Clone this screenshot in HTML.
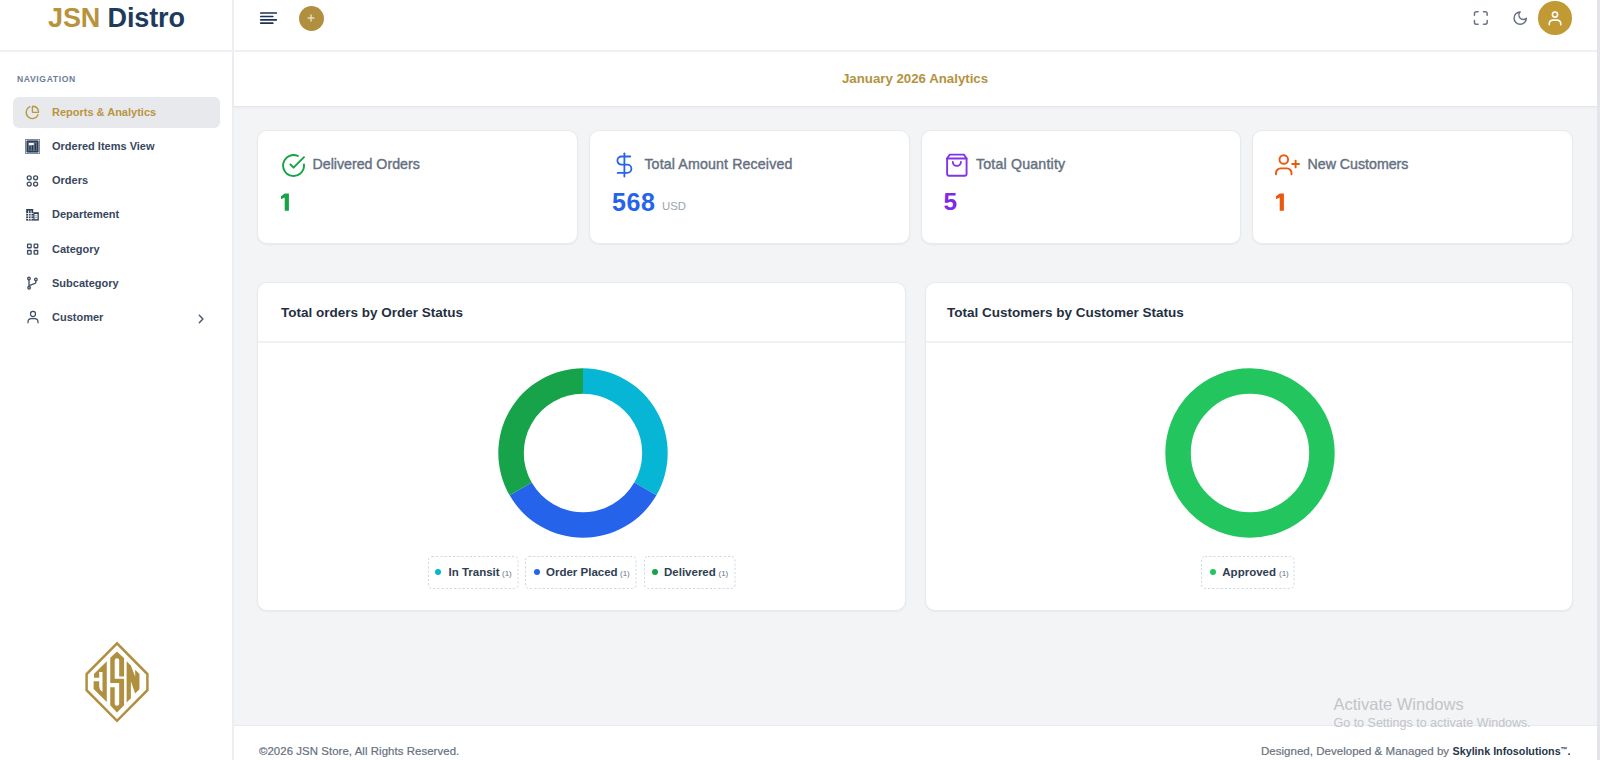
<!DOCTYPE html>
<html>
<head>
<meta charset="utf-8">
<style>
*{margin:0;padding:0;box-sizing:border-box;}
html,body{width:1600px;height:760px;overflow:hidden;background:#f3f4f6;font-family:"Liberation Sans",sans-serif;}
.a{position:absolute;}
.t{position:absolute;line-height:1;white-space:nowrap;}
#sidebar{left:0;top:0;width:232px;height:760px;background:#fff;}
#sbborder{left:232px;top:0;width:2px;height:760px;background:#eceef1;}
#header{left:234px;top:0;width:1363px;height:50px;background:#fff;}
#hdrline{left:0;top:50px;width:1597px;height:2px;background:#eef0f3;}
#scroll{left:1597px;top:0;width:3px;height:760px;background:#e4e5ea;}
#sub{left:234px;top:52px;width:1363px;height:54px;background:#fff;box-shadow:0 1px 0 #e6e7eb,0 2px 3px rgba(0,0,0,0.04);}
.card{position:absolute;background:#fff;border-radius:10px;border:1px solid #e9eaee;box-shadow:0 1px 2px rgba(0,0,0,0.05);}
.nav{color:#37475d;font-size:11px;font-weight:700;}
.lbl{color:#65707f;font-size:14.2px;-webkit-text-stroke:0.4px #65707f;}
.num{font-size:24.5px;font-weight:700;}
.ctitle{color:#1f2f42;font-size:13.5px;font-weight:700;}
.leg{position:absolute;top:556px;height:33px;}
.leg svg{position:absolute;left:0;top:0;}
.leg .d{position:absolute;top:13px;width:6px;height:6px;border-radius:50%;}
.legt{color:#2f3e52;font-size:11.5px;font-weight:700;}
.legc{color:#6b7280;font-size:8px;}
</style>
</head>
<body>
<div id="sidebar" class="a"></div>
<div id="sbborder" class="a"></div>
<div id="header" class="a"></div>
<div id="hdrline" class="a"></div>
<div id="sub" class="a"></div>
<div id="scroll" class="a"></div>

<!-- logo -->
<div class="t" style="left:48px;top:4.5px;font-size:27px;font-weight:700;letter-spacing:-0.12px;"><span style="color:#b8933b">JSN</span> <span style="color:#1e3a5c">Distro</span></div>

<!-- nav -->
<div class="t" style="left:17px;top:75.4px;font-size:8.6px;font-weight:700;color:#6e7c9a;letter-spacing:0.62px;">NAVIGATION</div>
<div class="a" style="left:13px;top:97px;width:207px;height:31px;background:#e8e9ed;border-radius:6px;"></div>
<div class="t nav" style="left:52px;top:106.7px;color:#b8953f;">Reports &amp; Analytics</div>
<div class="t nav" style="left:52px;top:140.9px;">Ordered Items View</div>
<div class="t nav" style="left:52px;top:175.1px;">Orders</div>
<div class="t nav" style="left:52px;top:209.3px;">Departement</div>
<div class="t nav" style="left:52px;top:243.5px;">Category</div>
<div class="t nav" style="left:52px;top:277.7px;">Subcategory</div>
<div class="t nav" style="left:52px;top:311.9px;">Customer</div>

<!-- subheader -->
<div class="t" style="left:842px;top:71.6px;font-size:13.25px;font-weight:700;color:#b39340;">January 2026 Analytics</div>

<!-- stat cards -->
<div class="card" style="left:257px;top:130px;width:320.75px;height:114px;"></div>
<div class="card" style="left:588.75px;top:130px;width:320.75px;height:114px;"></div>
<div class="card" style="left:920.5px;top:130px;width:320.75px;height:114px;"></div>
<div class="card" style="left:1252.25px;top:130px;width:320.75px;height:114px;"></div>

<div class="t lbl" style="left:312.5px;top:157px;">Delivered Orders</div>
<svg class="a" style="left:276px;top:188px;" width="20" height="28" viewBox="0 0 20 28"><path fill="#16a34a" d="M8.7 5.5H12.9V22.66H8.7V9.6L5 11.3V8.2Z"/></svg>
<div class="t lbl" style="left:644.4px;top:157px;letter-spacing:0.14px;">Total Amount Received</div>
<div class="t num" style="left:612px;top:190.2px;color:#2563eb;font-size:25px;letter-spacing:0.6px;">568</div>
<div class="t" style="left:662px;top:201.1px;font-size:11.4px;color:#9ca3af;">USD</div>
<div class="t lbl" style="left:975.9px;top:157px;letter-spacing:0.19px;">Total Quantity</div>
<div class="t num" style="left:943.5px;top:190.1px;color:#7c2ae8;">5</div>
<div class="t lbl" style="left:1307.5px;top:157px;">New Customers</div>
<svg class="a" style="left:1270.5px;top:188px;" width="20" height="28" viewBox="0 0 20 28"><path fill="#ea580c" d="M8.7 5.5H12.9V22.66H8.7V9.6L5 11.3V8.2Z"/></svg>

<!-- chart cards -->
<div class="card" style="left:257px;top:282px;width:648.5px;height:329px;">
  <div class="a" style="left:0;top:58px;width:100%;height:2px;background:#f0f1f4;"></div>
</div>
<div class="card" style="left:924.5px;top:282px;width:648.5px;height:329px;">
  <div class="a" style="left:0;top:58px;width:100%;height:2px;background:#f0f1f4;"></div>
</div>
<div class="t ctitle" style="left:281px;top:305.9px;">Total orders by Order Status</div>
<div class="t ctitle" style="left:947px;top:305.9px;">Total Customers by Customer Status</div>

<!-- footer -->
<div class="a" style="left:234px;top:725px;width:1363px;height:35px;background:#fff;border-top:1px solid #e8eaed;"></div>
<div class="t" style="left:259px;top:745.8px;font-size:11.4px;color:#66707f;-webkit-text-stroke:0.2px #66707f;letter-spacing:0.07px;">©2026 JSN Store, All Rights Reserved.</div>
<div class="t" style="left:1261px;top:745.8px;font-size:11.55px;color:#6b7280;-webkit-text-stroke:0.2px #6b7280;">Designed, Developed &amp; Managed by </div>
<div class="t" style="left:1452.5px;top:746.4px;font-size:10.75px;color:#26364b;font-weight:700;">Skylink Infosolutions<span style="font-size:7px;vertical-align:3px;">™</span>.</div>



<!-- header icons -->
<svg class="a" style="left:258px;top:10px;" width="22" height="16" viewBox="0 0 22 16">
<g stroke="#1e3350" stroke-width="1.7" stroke-linecap="round">
<line x1="2.8" y1="3" x2="18.3" y2="3"/><line x1="2.8" y1="6.5" x2="14.8" y2="6.5"/>
<line x1="2.8" y1="9.8" x2="18.3" y2="9.8"/><line x1="2.8" y1="13.2" x2="14.8" y2="13.2"/>
</g></svg>
<div class="a" style="left:298.6px;top:5.6px;width:25px;height:25px;border-radius:50%;background:#b0903f;"></div>
<svg class="a" style="left:305px;top:12px;" width="12" height="12" viewBox="0 0 12 12">
<g stroke="#eadfc4" stroke-width="1.4"><line x1="6" y1="2.6" x2="6" y2="9.4"/><line x1="2.6" y1="6" x2="9.4" y2="6"/></g></svg>

<svg class="a" style="left:1471px;top:9px;" width="20" height="20" viewBox="0 0 20 20">
<g fill="none" stroke="#6b7280" stroke-width="1.5" stroke-linecap="round" stroke-linejoin="round">
<path d="M3.45 6.3V4.4A1.75 1.75 0 0 1 5.2 2.65H7.1"/><path d="M12.5 2.65h1.9A1.75 1.75 0 0 1 16.15 4.4V6.3"/>
<path d="M16.15 11.6v1.8a1.75 1.75 0 0 1 -1.75 1.75H12.5"/><path d="M7.1 15.15H5.2A1.75 1.75 0 0 1 3.45 13.4V11.6"/>
</g></svg>
<svg class="a" style="left:1511.6px;top:9.8px;" width="16.4" height="16.4" viewBox="0 0 24 24">
<path fill="none" stroke="#646e7e" stroke-width="2.1" stroke-linecap="round" stroke-linejoin="round" d="M12 3a6 6 0 0 0 9 9 9 9 0 1 1-9-9Z"/>
</svg>
<div class="a" style="left:1538.2px;top:1.3px;width:33.5px;height:33.5px;border-radius:50%;background:#c19a34;"></div>
<svg class="a" style="left:1545px;top:8px;" width="20" height="20" viewBox="0 0 20 20">
<g fill="none" stroke="#fff" stroke-width="1.6" stroke-linecap="round">
<circle cx="10" cy="6.6" r="2.6"/><path d="M4.3 16.8v-1.3a3.4 3.4 0 0 1 3.4 -3.4h4.6a3.4 3.4 0 0 1 3.4 3.4v1.3"/>
</g></svg>

<!-- nav icons -->
<svg class="a" style="left:25px;top:104.8px;" width="14.8" height="14.8" viewBox="0 0 24 24">
<g fill="none" stroke="#b8953f" stroke-width="2.2" stroke-linecap="round" stroke-linejoin="round">
<path d="M21 12c.552 0 1.005-.449.95-.998a10 10 0 0 0-8.953-8.951c-.55-.055-.998.398-.998.95v8a1 1 0 0 0 1 1z"/>
<path d="M21.21 15.89A10 10 0 1 1 8 2.83"/>
</g></svg>
<svg class="a" style="left:25px;top:139px;" width="15" height="15" viewBox="0 0 15 15">
<rect x="0" y="0" width="15" height="15" fill="#7d8898"/>
<circle cx="1.4" cy="1.4" r="0.6" fill="#e8ebef"/><circle cx="13.6" cy="1.4" r="0.6" fill="#e8ebef"/><circle cx="1.4" cy="13.6" r="0.6" fill="#e8ebef"/><circle cx="13.6" cy="13.6" r="0.6" fill="#e8ebef"/>
<rect x="2.1" y="2.1" width="10.8" height="10.8" fill="#22344a"/>
<rect x="3.1" y="3.1" width="8.8" height="8.8" fill="#66768a"/>
<rect x="4.4" y="7" width="1.2" height="4.3" fill="#22344a"/><rect x="7" y="6.2" width="1" height="5.1" fill="#22344a"/><rect x="9.7" y="4.2" width="1.2" height="7.1" fill="#22344a"/>
<rect x="3.8" y="4" width="5" height="2.1" fill="#f4f6f8"/>
</svg>
<svg class="a" style="left:25px;top:173px;" width="15" height="15" viewBox="0 0 15 15">
<g fill="none" stroke="#3b4b60" stroke-width="1.3">
<circle cx="4.2" cy="4.8" r="2"/><circle cx="10.6" cy="4.8" r="2"/><circle cx="4.2" cy="11.1" r="2"/><circle cx="10.6" cy="11.1" r="2"/>
</g></svg>
<svg class="a" style="left:25px;top:207px;" width="15" height="15" viewBox="0 0 15 15">
<g fill="#2e3e54">
<rect x="1.2" y="2" width="7" height="11.6"/>
<rect x="8.2" y="5.2" width="5.6" height="8.4"/>
</g>
<g fill="#fff">
<rect x="3.2" y="3.5" width="0.9" height="10"/><rect x="5.6" y="3.5" width="0.9" height="10"/>
<rect x="1.2" y="6" width="7" height="0.8"/><rect x="1.2" y="8.6" width="7" height="0.8"/><rect x="1.2" y="11.2" width="7" height="0.8"/>
<rect x="9.5" y="7" width="3" height="5.2"/>
</g>
<g fill="#2e3e54"><rect x="10.5" y="8.3" width="1" height="1"/><rect x="10.5" y="10.2" width="1" height="1"/></g>
</svg>
<svg class="a" style="left:25px;top:241px;" width="15" height="15" viewBox="0 0 15 15">
<g fill="none" stroke="#3b4b60" stroke-width="1.3">
<rect x="2.55" y="3.15" width="3.6" height="3.6" rx="0.6"/><rect x="9.15" y="3.15" width="3.6" height="3.6" rx="0.6"/>
<rect x="2.55" y="9.5" width="3.6" height="3.6" rx="0.6"/><rect x="9.15" y="9.5" width="3.6" height="3.6" rx="0.6"/>
</g></svg>
<svg class="a" style="left:25px;top:275px;" width="15" height="15" viewBox="0 0 15 15">
<g fill="none" stroke="#435266" stroke-width="1.4" stroke-linecap="round">
<circle cx="3.95" cy="3.5" r="1.25"/><circle cx="10.9" cy="4.4" r="1.25"/><circle cx="4.1" cy="12.8" r="1.25"/>
<line x1="4" y1="4.8" x2="4" y2="11.5"/><path d="M10.9 5.7v1.2q0 1.3 -1.6 1.8l-4.4 1.6"/>
</g></svg>
<svg class="a" style="left:24.5px;top:309.2px;" width="16" height="16" viewBox="0 0 24 24">
<g fill="none" stroke="#3b4b60" stroke-width="1.8" stroke-linecap="round" stroke-linejoin="round">
<circle cx="12" cy="7.5" r="3.8"/><path d="M4.5 20.8v-1.3a5 5 0 0 1 5 -5h5a5 5 0 0 1 5 5v1.3"/>
</g></svg>
<svg class="a" style="left:195px;top:312px;" width="12" height="13" viewBox="0 0 12 13">
<path fill="none" stroke="#4a5a6e" stroke-width="1.45" stroke-linecap="round" stroke-linejoin="round" d="M4.3 3.2l3.6 3.8l-3.6 3.8"/>
</svg>

<!-- card icons -->
<svg class="a" style="left:280.5px;top:152.8px;" width="25.1" height="25.1" viewBox="0 0 24 24">
<g fill="none" stroke="#16a34a" stroke-width="1.85" stroke-linecap="round" stroke-linejoin="round">
<path d="M22 11.08V12a10 10 0 1 1-5.93-9.14"/><path d="M22 4 12 14.01l-3-3"/>
</g></svg>
<svg class="a" style="left:609px;top:151px;" width="30" height="27" viewBox="0 0 30 27">
<g fill="none" stroke="#2563eb" stroke-width="1.8" stroke-linecap="round" stroke-linejoin="round">
<line x1="15.4" y1="2.3" x2="15.4" y2="25.5"/><path d="M21.2 5.5H12.5a4.1 4.1 0 0 0 0 8.2h5.8a4.1 4.1 0 0 1 0 8.2H8.7"/>
</g></svg>
<svg class="a" style="left:943.8px;top:151.6px;" width="25.5" height="26.5" viewBox="0 0 27 28">
<g fill="none" stroke="#8033ea" stroke-width="2" stroke-linecap="round" stroke-linejoin="round">
<path d="M6 2.8h15.2l2.7 4v16.5a1.8 1.8 0 0 1 -1.8 1.8H5.1a1.8 1.8 0 0 1 -1.8 -1.8V6.8z"/><line x1="3.3" y1="6.8" x2="23.9" y2="6.8"/>
<path d="M17.9 10.6a4.3 4.1 0 0 1 -8.6 0"/>
</g></svg>
<svg class="a" style="left:1273px;top:152px;" width="30" height="26" viewBox="0 0 30 26">
<g fill="none" stroke="#ea580c" stroke-width="1.9" stroke-linecap="round" stroke-linejoin="round">
<circle cx="10.8" cy="7.5" r="4.3"/><path d="M3 22.2v-1.2a4.6 4.6 0 0 1 4.6 -4.6h6.3a4.6 4.6 0 0 1 4.6 4.6v1.2"/>
<line x1="22.6" y1="8.6" x2="22.6" y2="15.4"/><line x1="19.2" y1="12" x2="26" y2="12"/>
</g></svg>

<!-- sidebar logo -->
<svg class="a" style="left:84px;top:641px;" width="66" height="82" viewBox="0 0 66 82">
<path fill="none" stroke="#b08f3f" stroke-width="2.5" stroke-linejoin="miter" d="M33 2.3L2.6 33v16.2L33 79.8L63.4 49.2V33z"/>
<g fill="#b08f3f">
<path d="M22.78 20.25V61.04L9.62 47.88V40.32H15.21V45.58Q15.6 49.6 18.5 50.84V31.1H15.21V36.7H9.95V33.08Z"/>
<path d="M32.94 10.58L40.1 17.29V35.62H35.18V19.5A2.23 2.23 0 0 0 30.71 19.5V37.86H40.1V64.24L32.94 71.4L26.24 64.24V46.36H30.71V62.5A2.23 2.23 0 0 0 35.18 62.5V41.88H26.24V16.84Z"/>
<path d="M42.61 20.26L46.89 24.54L51.18 35.74V28.82L55.46 33.1V48.26L51.18 52.54L46.89 40.35V57.15L42.61 61.43Z"/>
</g>
</svg>

<!-- donuts -->
<svg class="a" style="left:497.75px;top:368.3px;" width="170" height="170" viewBox="0 0 170 170">
<path fill="#06b6d4" d="M85.00 0.30A84.7 84.7 0 0 1 158.35 127.35L136.27 114.60A59.2 59.2 0 0 0 85.00 25.80Z"/>
<path fill="#2563eb" d="M158.35 127.35A84.7 84.7 0 0 1 11.65 127.35L33.73 114.60A59.2 59.2 0 0 0 136.27 114.60Z"/>
<path fill="#16a34a" d="M11.65 127.35A84.7 84.7 0 0 1 85.00 0.30L85.00 25.80A59.2 59.2 0 0 0 33.73 114.60Z"/>
</svg>
<svg class="a" style="left:1164.5px;top:368.3px;" width="170" height="170" viewBox="0 0 170 170">
<circle cx="85" cy="85" r="71.95" fill="none" stroke="#22c55e" stroke-width="25.5"/>
</svg>

<!-- legends -->
<div class="leg" style="left:428px;width:90.5px;"><svg width="90.5" height="33"><rect x="0.5" y="0.5" width="89.5" height="32" rx="3.5" fill="none" stroke="#d3d8de" stroke-dasharray="2.2 2"/></svg><div class="d" style="left:7px;background:#06b6d4;"></div></div>
<div class="t legt" style="left:448.5px;top:567px;">In Transit</div>
<div class="t legc" style="left:502px;top:569.5px;">(1)</div>
<div class="leg" style="left:525px;width:111.5px;"><svg width="111.5" height="33"><rect x="0.5" y="0.5" width="110.5" height="32" rx="3.5" fill="none" stroke="#d3d8de" stroke-dasharray="2.2 2"/></svg><div class="d" style="left:8.5px;background:#2563eb;"></div></div>
<div class="t legt" style="left:546px;top:567px;">Order Placed</div>
<div class="t legc" style="left:620px;top:569.5px;">(1)</div>
<div class="leg" style="left:644px;width:91.5px;"><svg width="91.5" height="33"><rect x="0.5" y="0.5" width="90.5" height="32" rx="3.5" fill="none" stroke="#d3d8de" stroke-dasharray="2.2 2"/></svg><div class="d" style="left:8px;background:#16a34a;"></div></div>
<div class="t legt" style="left:664px;top:567px;">Delivered</div>
<div class="t legc" style="left:718.5px;top:569.5px;">(1)</div>
<div class="leg" style="left:1201px;width:93.5px;"><svg width="93.5" height="33"><rect x="0.5" y="0.5" width="92.5" height="32" rx="3.5" fill="none" stroke="#d3d8de" stroke-dasharray="2.2 2"/></svg><div class="d" style="left:8.9px;background:#22c55e;"></div></div>
<div class="t legt" style="left:1222.3px;top:567px;">Approved</div>
<div class="t legc" style="left:1279px;top:569.5px;">(1)</div>

<!-- watermark -->
<div class="t" style="left:1333.5px;top:696.3px;font-size:16.5px;color:#c2c4c8;">Activate Windows</div>
<div class="t" style="left:1333.5px;top:717px;font-size:12.5px;color:#c2c4c8;">Go to Settings to activate Windows.</div>

</body>
</html>
